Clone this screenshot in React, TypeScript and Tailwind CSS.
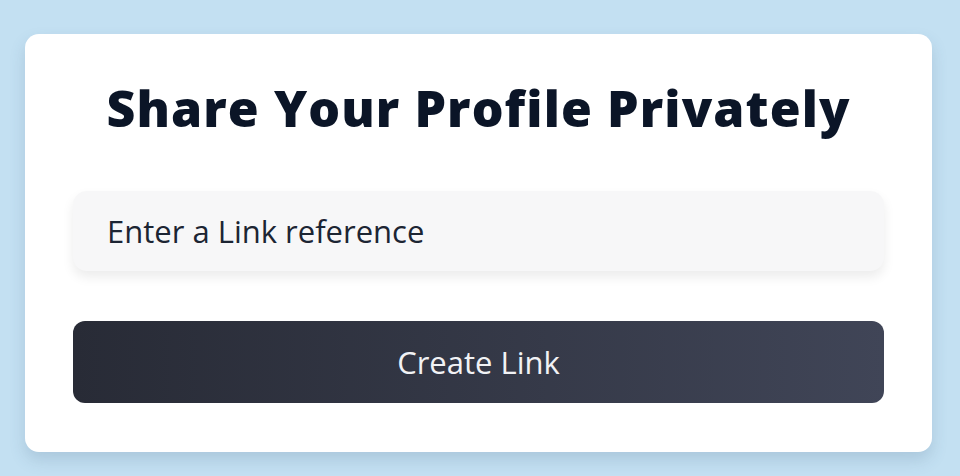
export default function App() {
    return (
        <div className="w-[960px] h-[476px] bg-[#c3e0f2] pt-[34px] pl-[25px] overflow-hidden" style={{ fontFamily: "'Open Sans', 'Noto Sans', sans-serif" }}>
            <div className="w-[907px] h-[418px] bg-white rounded-[14px] shadow-[0_8px_16px_rgba(60,90,120,0.18)] px-[48px] pt-[44px]">
                <h1 className="text-center text-[50px] leading-[60px] font-extrabold text-[#0b1527] tracking-[1.1px]">
                    Share Your Profile Privately
                </h1>

                {/* Link reference input */}
                <div className="mt-[53px] h-[80px] bg-[#f7f7f8] rounded-[14px] shadow-[0_6px_12px_rgba(0,0,0,0.08)] flex items-center px-[34px]">
                    <span className="text-[31px] text-[#1c2533]">Enter a Link reference</span>
                </div>

                <button className="mt-[50px] w-full h-[82px] rounded-[12px] bg-gradient-to-r from-[#282b36] to-[#404557] text-[#f1f2f5] text-[31px] flex items-center justify-center">
                    Create Link
                </button>
            </div>
        </div>
    );
}
